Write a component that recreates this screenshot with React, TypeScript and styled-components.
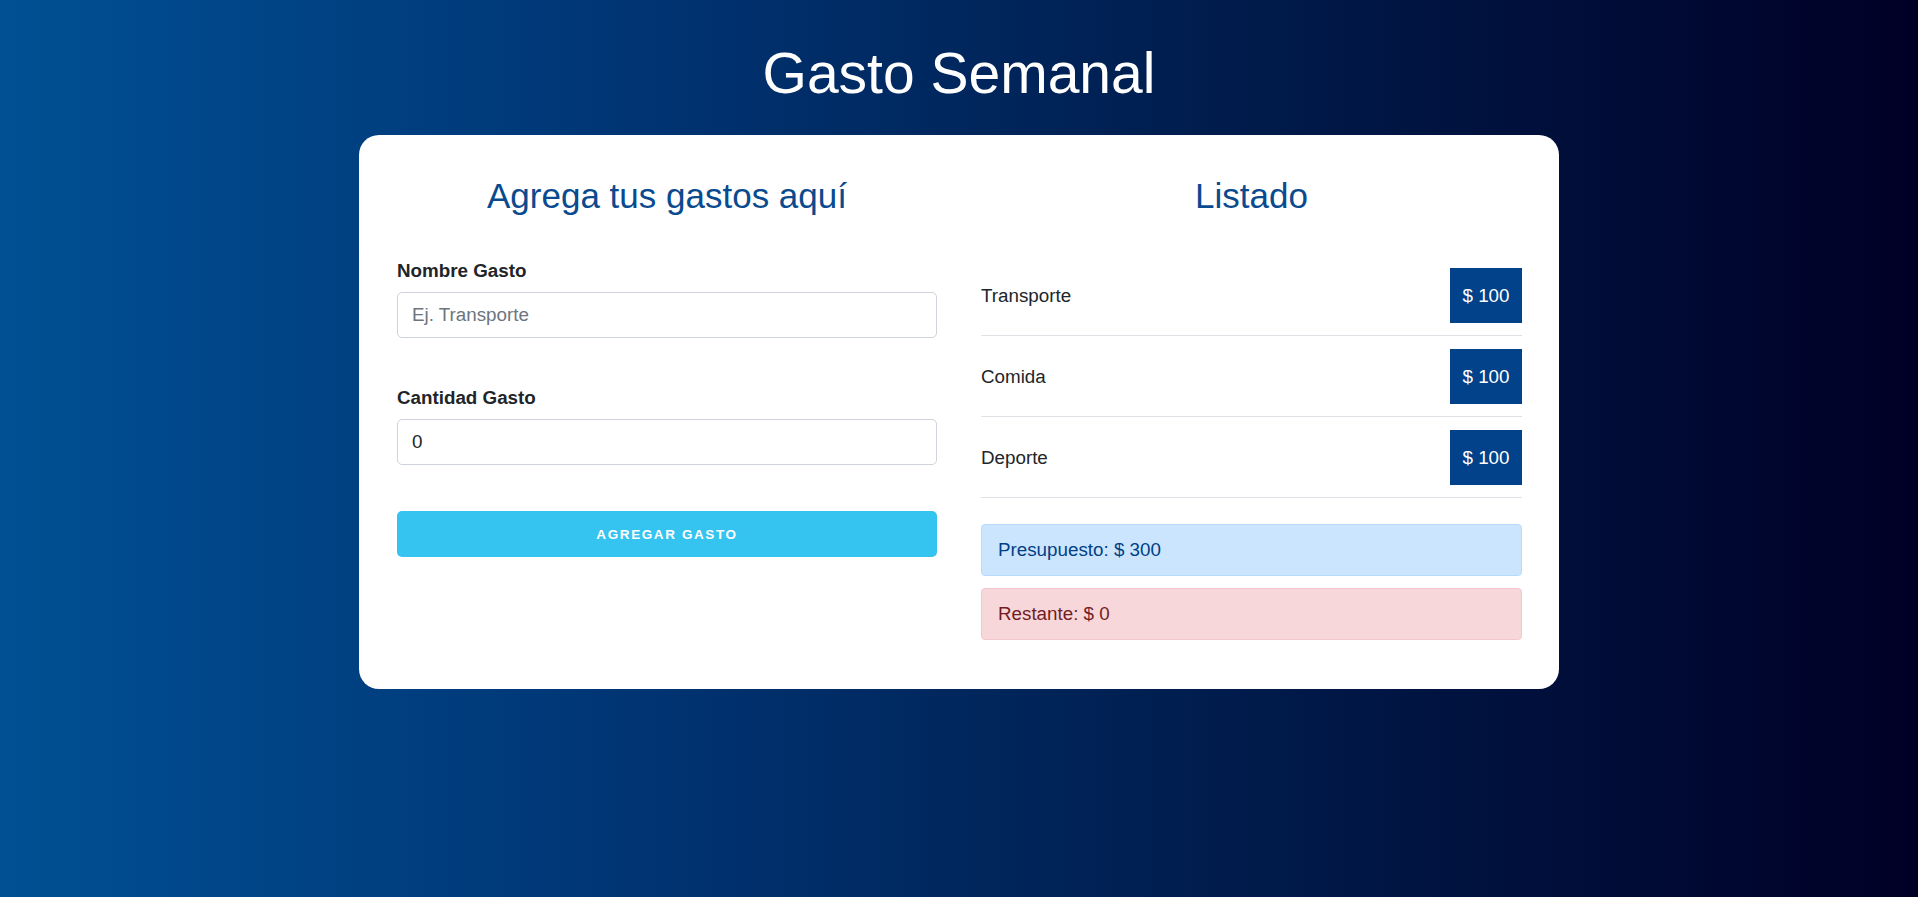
import * as React from 'react';
import styled, { createGlobalStyle } from 'styled-components';

const GlobalStyle = createGlobalStyle`
  *, *::before, *::after {
    box-sizing: border-box;
  }
  body {
    margin: 0;
    font-family: "Liberation Sans", Arial, Helvetica, sans-serif;
    font-size: 18.8px;
    color: #212529;
  }
`;

interface AlertProps {
  $variant: 'primary' | 'danger';
}

const alertColors = {
  primary: { bg: '#cce5ff', border: '#b8daff', text: '#004085' },
  danger: { bg: '#f8d7da', border: '#f5c6cb', text: '#721c24' }
};

const Page = styled.div`
  min-height: 100vh;
  padding-top: 39px;
  background: linear-gradient(to right, #005093 0%, #003777 30%, #001b4b 65%, #000026 100%);
`;

const Title = styled.h1`
  margin: 0 0 28px;
  text-align: center;
  color: #ffffff;
  font-size: 57px;
  line-height: 68px;
  font-weight: 400;
`;

const Card = styled.div`
  width: 1200px;
  margin: 0 auto;
  background: #ffffff;
  border-radius: 20px;
  padding: 40px 37px 49px 38px;
  display: grid;
  grid-template-columns: 540px 541px;
  column-gap: 44px;
  align-items: start;
`;

const Heading = styled.h2`
  margin: 0 0 39px;
  text-align: center;
  color: #0a4a8e;
  font-size: 35px;
  line-height: 41px;
  font-weight: 400;
`;

const Form = styled.form`
  padding-top: 2px;
`;

const Field = styled.div`
  margin-bottom: 46px;
`;

const Label = styled.label`
  display: block;
  margin-bottom: 7px;
  font-weight: 700;
  font-size: 18.8px;
  line-height: 28px;
  color: #212529;
`;

const Input = styled.input`
  display: block;
  width: 100%;
  height: 46px;
  padding: 0 14px;
  border: 1px solid #ced4da;
  border-radius: 5px;
  font-family: inherit;
  font-size: 18.8px;
  color: #212529;
  background: #fff;
  outline: none;

  &::placeholder {
    color: #6c757d;
  }
`;

const SubmitButton = styled.button`
  display: block;
  width: 100%;
  height: 46px;
  border: none;
  border-radius: 5px;
  background: #35c3f0;
  color: #ffffff;
  font-family: inherit;
  font-size: 13.5px;
  font-weight: 700;
  letter-spacing: 1.6px;
  text-transform: uppercase;
  cursor: pointer;
`;

const List = styled.ul`
  list-style: none;
  margin: 0;
  padding: 0;
`;

const Row = styled.li`
  display: flex;
  align-items: center;
  justify-content: space-between;
  padding: 13px 0 12px;
  border-bottom: 1px solid #dee2e6;
  font-size: 18.8px;
`;

const Badge = styled.span`
  display: flex;
  align-items: center;
  justify-content: center;
  width: 72px;
  height: 55px;
  background: #01428a;
  color: #ffffff;
  font-size: 18.8px;
`;

const Alerts = styled.div`
  display: flex;
  flex-direction: column;
  gap: 12px;
  margin-top: 26px;
`;

const Alert = styled.div<AlertProps>`
  padding: 11px 16px;
  line-height: 28px;
  font-size: 18.8px;
  border-radius: 4px;
  border: 1px solid ${(p) => alertColors[p.$variant].border};
  background: ${(p) => alertColors[p.$variant].bg};
  color: ${(p) => alertColors[p.$variant].text};
`;

const gastos = [
  { id: 1, nombre: 'Transporte', cantidad: 100 },
  { id: 2, nombre: 'Comida', cantidad: 100 },
  { id: 3, nombre: 'Deporte', cantidad: 100 }
];

const App = () => {
  const [nombre, setNombre] = React.useState('');
  const [cantidad, setCantidad] = React.useState('0');

  const presupuesto = 300;
  const restante = presupuesto - gastos.reduce((acc, g) => acc + g.cantidad, 0);

  return (
    <React.Fragment>
      <GlobalStyle />
      <Page>
        <Title>Gasto Semanal</Title>
        <Card>
          <div>
            <Heading>Agrega tus gastos aquí</Heading>
            <Form onSubmit={(e) => e.preventDefault()}>
              <Field>
                <Label>Nombre Gasto</Label>
                <Input
                  type="text"
                  placeholder="Ej. Transporte"
                  value={nombre}
                  onChange={(e) => setNombre(e.target.value)}
                />
              </Field>
              <Field>
                <Label>Cantidad Gasto</Label>
                <Input
                  type="number"
                  value={cantidad}
                  onChange={(e) => setCantidad(e.target.value)}
                />
              </Field>
              <SubmitButton type="submit">Agregar Gasto</SubmitButton>
            </Form>
          </div>
          <div>
            <Heading>Listado</Heading>
            <List>
              {gastos.map((g) => (
                <Row key={g.id}>
                  {g.nombre}
                  <Badge>$ {g.cantidad}</Badge>
                </Row>
              ))}
            </List>
            <Alerts>
              <Alert $variant="primary">Presupuesto: $ {presupuesto}</Alert>
              <Alert $variant="danger">Restante: $ {restante}</Alert>
            </Alerts>
          </div>
        </Card>
      </Page>
    </React.Fragment>
  );
};

export default App;
